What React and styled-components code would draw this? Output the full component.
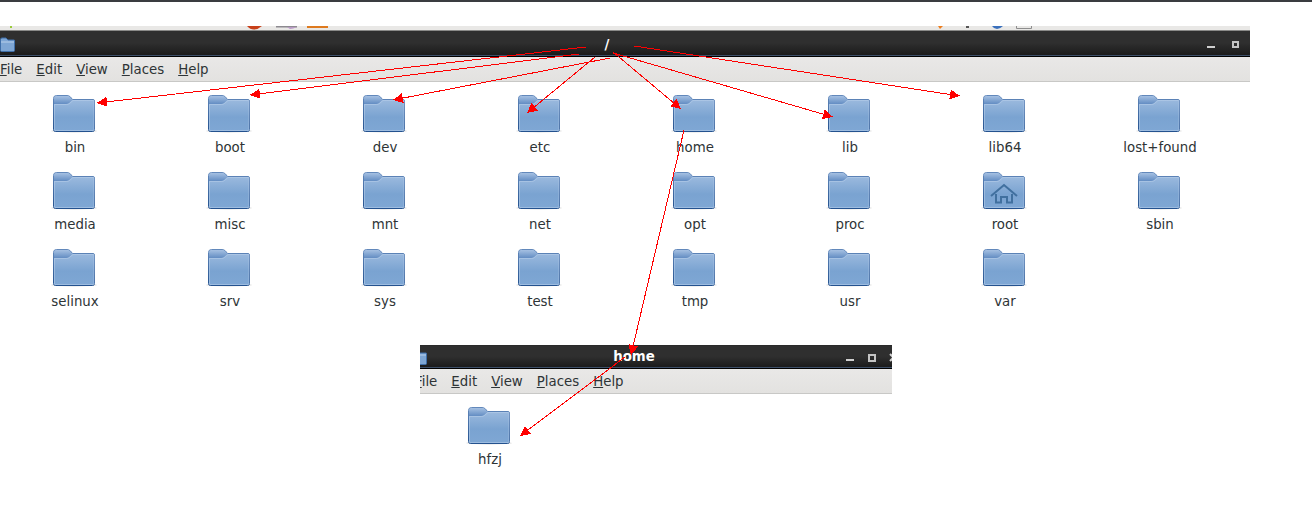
import React from 'react'
import styled, { createGlobalStyle } from 'styled-components'

const GlobalStyle = createGlobalStyle`
  html, body {
    margin: 0;
    padding: 0;
    background: #fff;
  }
  body {
    font-family: "DejaVu Sans", "Liberation Sans", sans-serif;
    font-size: 13.33px;
    color: #2e3436;
  }
`

const Page = styled.div`
  position: relative;
  width: 1312px;
  height: 523px;
  overflow: hidden;
  background: #fff;
`

const TopEdge = styled.div`
  height: 2px;
  background: #3a3c40;
`

const Gap = styled.div`
  height: 24px;
`

const PeekStrip = styled.div`
  width: 1250px;
  height: 4px;
  background: #e9e8e6;
  line-height: 0;
`

const Window = styled.div`
  width: ${p => p.$width}px;
  margin-left: ${p => p.$left || 0}px;
  margin-top: ${p => p.$top || 0}px;
  overflow: hidden;
`

const TitleBar = styled.div`
  display: flex;
  align-items: center;
  box-sizing: border-box;
  height: ${p => p.$height}px;
  background: linear-gradient(#2f2f2f 0%, #2f2f2f 45%, #1b1b1b 92%, #3d4f68 92%, #3d4f68 96%, #000 96%);
  border-top: 1px solid ${p => p.$edge};
`

const TitleIcon = styled.div`
  flex: none;
  width: ${p => p.$visible}px;
  height: 15px;
  position: relative;
  overflow: hidden;
  line-height: 0;
  svg {
    position: absolute;
    right: 0;
    top: 0;
  }
`

const Title = styled.div`
  flex: 1;
  padding-bottom: ${p => p.$lift || 0}px;
  text-align: center;
  color: #fff;
  font-weight: bold;
  font-size: 13.33px;
`

const Controls = styled.div`
  flex: none;
  width: 51px;
  box-sizing: border-box;
  padding-left: ${p => p.$pad}px;
  display: flex;
  align-items: center;
  gap: ${p => p.$gap}px;
  & > * {
    flex: none;
  }
`

const MinButton = styled.div`
  width: 8px;
  height: 2px;
  margin-top: 5px;
  background: #cfcfcf;
`

const MaxButton = styled.div`
  box-sizing: border-box;
  width: ${p => p.$size}px;
  height: ${p => p.$size}px;
  border: 2px solid #c4c4c4;
`

const MenuBar = styled.div`
  display: flex;
  align-items: center;
  gap: 14px;
  box-sizing: border-box;
  height: 25px;
  margin-left: ${p => p.$shift || 0}px;
  background: linear-gradient(#e9e8e7, #e3e2e0);
  border-bottom: 1px solid #c8c8c6;
`

const MenuItem = styled.span`
  color: #2e3436;
  white-space: nowrap;
`

const FileGrid = styled.div`
  display: grid;
  grid-template-columns: repeat(8, 155px);
  grid-auto-rows: 77px;
  padding: ${p => p.$top}px 0 0 ${p => p.$left}px;
`

const FileCell = styled.div`
  display: flex;
  flex-direction: column;
  align-items: center;
  width: 42px;
`

const FileLabel = styled.div`
  margin-top: 7px;
  padding-left: 2px;
  white-space: nowrap;
  line-height: 16px;
`

const ArrowLayer = styled.svg`
  position: absolute;
  left: 0;
  top: 0;
`

const FolderIcon = ({ home }) => (
  <svg width="46" height="38" viewBox="0 0 46 38" style={{ flex: 'none', margin: '0 -2px' }}>
    <defs>
      <linearGradient id="folderBody" x1="0" y1="0" x2="0" y2="1">
        <stop offset="0" stopColor="#a3bfe1" />
        <stop offset="0.6" stopColor="#7aa3d1" />
        <stop offset="1" stopColor="#7fa7d4" />
      </linearGradient>
      <linearGradient id="folderTab" x1="0" y1="0" x2="0" y2="1">
        <stop offset="0" stopColor="#a5c0e2" />
        <stop offset="1" stopColor="#638dc3" />
      </linearGradient>
      <linearGradient id="folderEdge" x1="0" y1="0" x2="0" y2="1">
        <stop offset="0" stopColor="#6288bb" />
        <stop offset="1" stopColor="#24528f" />
      </linearGradient>
    </defs>
    <ellipse cx="23" cy="36" rx="23" ry="1.5" fill="#000" opacity="0.14" />
    <path
      d="M2.5 3.5 Q2.5 0.5 5.5 0.5 H16 Q18 0.5 19.5 2 L21.5 4.5 H42 Q43.5 4.5 43.5 6 V34.5 Q43.5 36.5 41.5 36.5 H4.5 Q2.5 36.5 2.5 34.5 Z"
      fill="url(#folderBody)"
      stroke="url(#folderEdge)"
    />
    <path d="M3 4 Q3 1 6 1 H16 Q18 1 19 2.5 L21.5 5 L18 8 Q17 9 15 9 H3 Z" fill="url(#folderTab)" />
    <path d="M3 9.5 H15.5 Q17.5 9.5 18.5 8.5 L22 5.5 H43 V35.5 H3.5 V10" fill="none" stroke="#bcd2ec" opacity="0.5" />
    {home && (
      <g fill="none" stroke="#41709f" strokeWidth="2">
        <path d="M10 24 L23 13 L36 24" />
        <path d="M15 22 V30.5 H20 V25 H26 V30.5 H31 V22" />
      </g>
    )}
  </svg>
)

const SmallFolder = () => (
  <svg width="15" height="15" viewBox="0 0 15 15">
    <path d="M0.5 2.5 Q0.5 1 2 1 H6 L8 3 H14 Q14.5 3 14.5 3.5 V13.5 Q14.5 14.5 13.5 14.5 H1.5 Q0.5 14.5 0.5 13.5 Z" fill="#7ea6d4" stroke="#3f6fa9" />
    <path d="M1 5 H14" stroke="#b7cfea" />
  </svg>
)

const CloseIcon = () => (
  <svg width="9" height="9" viewBox="0 0 9 9" style={{ marginLeft: -1 }}>
    <path d="M1 1 L8 8 M8 1 L1 8" stroke="#d0d0d0" strokeWidth="2" />
  </svg>
)

// bits of the desktop icons poking out above the window
const DesktopPeek = () => (
  <svg width="1250" height="4" viewBox="0 0 1250 4">
    <rect x="10" y="0" width="2" height="2" fill="#9bcb3c" />
    <path d="M247 0 H262 Q258 3.5 254 3.5 Q250 3.5 247 0 Z" fill="#c8401a" />
    <rect x="276" y="0" width="21" height="1.5" fill="#8d8a90" />
    <path d="M287 1 H297 Q293 3 290 3 Z" fill="#b89ac4" />
    <rect x="307" y="0" width="21" height="2" fill="#de7a1e" />
    <path d="M938 0 H943 L940 3 Z" fill="#ee7d1c" />
    <rect x="966" y="0" width="3" height="2" fill="#555" />
    <path d="M992 0 H1003 Q1000 3 997 3 Q994 3 992 0 Z" fill="#3a70bc" />
    <path d="M1016.5 0 V2.5 H1031.5 V0" fill="none" stroke="#8d8d8d" />
  </svg>
)

const rows = [
  ['bin', 'boot', 'dev', 'etc', 'home', 'lib', 'lib64', 'lost+found'],
  ['media', 'misc', 'mnt', 'net', 'opt', 'proc', 'root', 'sbin'],
  ['selinux', 'srv', 'sys', 'test', 'tmp', 'usr', 'var'],
]

const menus = ['File', 'Edit', 'View', 'Places', 'Help']

const arrows = [
  [586, 47, 97, 103],
  [579, 54, 250, 95],
  [610, 58, 393, 100],
  [595, 57, 527, 113],
  [613, 52, 681, 109],
  [613, 53, 833, 117],
  [634, 46, 960, 96],
  [684, 130, 631, 355],
  [625, 357, 520, 436],
]

const arrowHead = ([x1, y1, x2, y2]) => {
  const len = Math.hypot(x2 - x1, y2 - y1)
  const ux = (x2 - x1) / len
  const uy = (y2 - y1) / len
  const bx = x2 - ux * 10
  const by = y2 - uy * 10
  return `${x2},${y2} ${bx - uy * 5},${by + ux * 5} ${bx + uy * 5},${by - ux * 5}`
}

const Menu = ({ shift }) => (
  <MenuBar $shift={shift}>
    {menus.map(m => (
      <MenuItem key={m}><u>{m[0]}</u>{m.slice(1)}</MenuItem>
    ))}
  </MenuBar>
)

export default function App() {
  return (
    <Page>
      <GlobalStyle />
      <TopEdge />
      <Gap />
      <PeekStrip><DesktopPeek /></PeekStrip>

      <Window $width={1250}>
        <TitleBar $height={27} $edge="#8a8a88">
          <TitleIcon $visible={15}><SmallFolder /></TitleIcon>
          <Title>/</Title>
          <Controls $pad={8} $gap={17}>
            <MinButton />
            <MaxButton $size={7} />
          </Controls>
        </TitleBar>
        <Menu />
        <FileGrid $top={13} $left={53}>
          {rows.flat().map(name => (
            <FileCell key={name}>
              <FolderIcon home={name === 'root'} />
              <FileLabel>{name}</FileLabel>
            </FileCell>
          ))}
        </FileGrid>
      </Window>

      <Window $width={472} $left={420} $top={19}>
        <TitleBar $height={24} $edge="#2a2a2a">
          <TitleIcon $visible={7}><SmallFolder /></TitleIcon>
          <Title $lift={2}>home</Title>
          <Controls $pad={5} $gap={14}>
            <MinButton />
            <MaxButton $size={8} />
            <CloseIcon />
          </Controls>
        </TitleBar>
        <Menu shift={-5} />
        <FileGrid $top={13} $left={48}>
          <FileCell>
            <FolderIcon />
            <FileLabel>hfzj</FileLabel>
          </FileCell>
        </FileGrid>
      </Window>

      <ArrowLayer width="1312" height="523" viewBox="0 0 1312 523">
        {arrows.map(a => (
          <g key={a.join('-')} shapeRendering="crispEdges">
            <line x1={a[0]} y1={a[1]} x2={a[2]} y2={a[3]} stroke="#f00" strokeWidth="1" />
            <polygon points={arrowHead(a)} fill="#f00" />
          </g>
        ))}
      </ArrowLayer>
    </Page>
  )
}
